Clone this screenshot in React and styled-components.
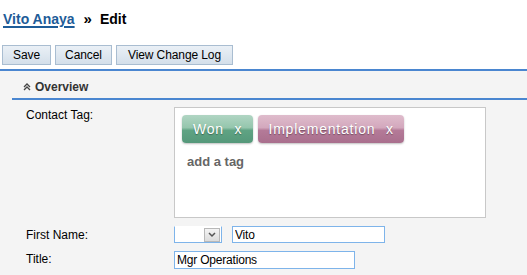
import React from "react";
import styled, { createGlobalStyle } from "styled-components";

const Global = createGlobalStyle`
  html, body { margin: 0; padding: 0; }
  body {
    background: #f4f4f4;
    font-family: "Liberation Sans", Arial, sans-serif;
    color: #000;
    width: 527px;
    height: 275px;
    overflow: hidden;
  }
`;

const Top = styled.div`
  background: #fff;
  padding: 10px 0 0 3px;
  border-bottom: 2px solid #4a86d0;
  height: 59px;
  box-sizing: content-box;
`;

const Title = styled.h1`
  margin: 0;
  font-size: 14px;
  font-weight: bold;
  line-height: 18px;
  display: flex;
  align-items: center;
  gap: 8px;
`;

const Crumb = styled.a`
  color: #1e5c98;
  text-decoration: underline;
  text-decoration-thickness: 2px;
  text-underline-offset: 2px;
  cursor: pointer;
`;

const Sep = styled.span`
  font-size: 15px;
  margin-left: 1px;
`;

const Toolbar = styled.div`
  display: flex;
  gap: 4px;
  margin: 17px 0 0 -1px;
`;

const Button = styled.button`
  width: ${(p) => p.$w}px;
  height: 20px;
  padding: 0;
  border: 1px solid #a9bdd1;
  background: linear-gradient(#eaf0f6, #d4dfea);
  font-family: "Liberation Sans", Arial, sans-serif;
  font-size: 12px;
  color: #000;
  border-radius: 0;
  letter-spacing: -0.1px;
`;

const Section = styled.div`
  margin: 4px 0 0 12px;
`;

const SectionHead = styled.div`
  display: flex;
  align-items: center;
  gap: 4px;
  height: 25px;
  padding-left: 11px;
  border-bottom: 2px solid #4a86d0;
  font-size: 12px;
  font-weight: bold;
  color: #333;
  box-sizing: border-box;
`;

const Rows = styled.div`
  display: grid;
  grid-template-columns: 148px 1fr;
  padding: 7px 0 0 14px;
  row-gap: 8px;
`;

const Label = styled.div`
  font-size: 12px;
  line-height: 14px;
  padding-top: ${(p) => p.$top || 0}px;
`;

const TagBox = styled.div`
  width: 312px;
  height: 111px;
  box-sizing: border-box;
  background: #fff;
  border: 1px solid #c8c8c8;
  padding: 7px 7px;
`;

const Tags = styled.div`
  display: flex;
  gap: 5px;
`;

const Pill = styled.span`
  display: inline-flex;
  align-items: center;
  height: 28px;
  padding: 0 ${(p) => p.$pad}px;
  border-radius: 4px;
  color: #fff;
  font-size: 14px;
  letter-spacing: 0.8px;
  text-shadow: 0 1px 1px rgba(0,0,0,0.35);
  box-shadow: 0 1px 2px rgba(0,0,0,0.25);
  background: ${(p) =>
    p.$tone === "green"
      ? "linear-gradient(#b0d5c3 0%, #95c6ad 45%, #5fa383 55%, #55987a 100%)"
      : "linear-gradient(#dfbccc 0%, #d3a8bd 45%, #b47a98 55%, #a96f8d 100%)"};
  word-spacing: 6px;
`;

const AddTag = styled.div`
  margin: 11px 0 0 5px;
  font-size: 13px;
  font-weight: bold;
  color: #666;
`;

const Inline = styled.div`
  display: flex;
  gap: 10px;
`;

const Select = styled.div`
  width: 48px;
  height: 17px;
  box-sizing: border-box;
  background: #fff;
  border: 1px solid #7eb4ea;
  border-top-color: #fff;
  display: flex;
  justify-content: flex-end;
  align-items: center;
  padding-right: 1px;
`;

const Arrow = styled.span`
  width: 16px;
  height: 14px;
  box-sizing: border-box;
  border: 1px solid #b8b8b8;
  background: linear-gradient(#f4f4f4, #dcdcdc);
  display: flex;
  align-items: center;
  justify-content: center;
`;

const Input = styled.input`
  width: ${(p) => p.$w}px;
  height: ${(p) => p.$h || 18}px;
  box-sizing: border-box;
  border: 1px solid #7eb4ea;
  padding: 0 2px;
  font-family: "Liberation Sans", Arial, sans-serif;
  font-size: 12px;
  color: #000;
  background: #fff;
  outline: none;
  letter-spacing: -0.2px;
`;

export default function App() {
  return (
    <>
      <Global />
      <Top>
        <Title>
          <Crumb>Vito Anaya</Crumb>
          <Sep>»</Sep>
          <span>Edit</span>
        </Title>
        <Toolbar>
          <Button $w={49}>Save</Button>
          <Button $w={57}>Cancel</Button>
          <Button $w={117}>View Change Log</Button>
        </Toolbar>
      </Top>
      <Section>
        <SectionHead>
          <svg width="8" height="8" viewBox="0 0 8 8">
            <path d="M1 4 L4 1 L7 4 M1 7 L4 4 L7 7" stroke="#444" strokeWidth="1.3" fill="none" />
          </svg>
          <span>Overview</span>
        </SectionHead>
        <Rows>
          <Label $top={1}>Contact Tag:</Label>
          <TagBox>
            <Tags>
              <Pill $tone="green" $pad={11}>Won x</Pill>
              <Pill $tone="pink" $pad={10}>Implementation x</Pill>
            </Tags>
            <AddTag>add a tag</AddTag>
          </TagBox>
          <Label $top={2}>First Name:</Label>
          <Inline>
            <Select>
              <Arrow>
                <svg width="8" height="6" viewBox="0 0 8 6">
                  <path d="M1 1 L4 4 L7 1" stroke="#555" strokeWidth="1.5" fill="none" />
                </svg>
              </Arrow>
            </Select>
            <Input $w={153} $h={17} defaultValue="Vito" />
          </Inline>
          <Label $top={1}>Title:</Label>
          <Input $w={181} defaultValue="Mgr Operations" />
        </Rows>
      </Section>
    </>
  );
}
